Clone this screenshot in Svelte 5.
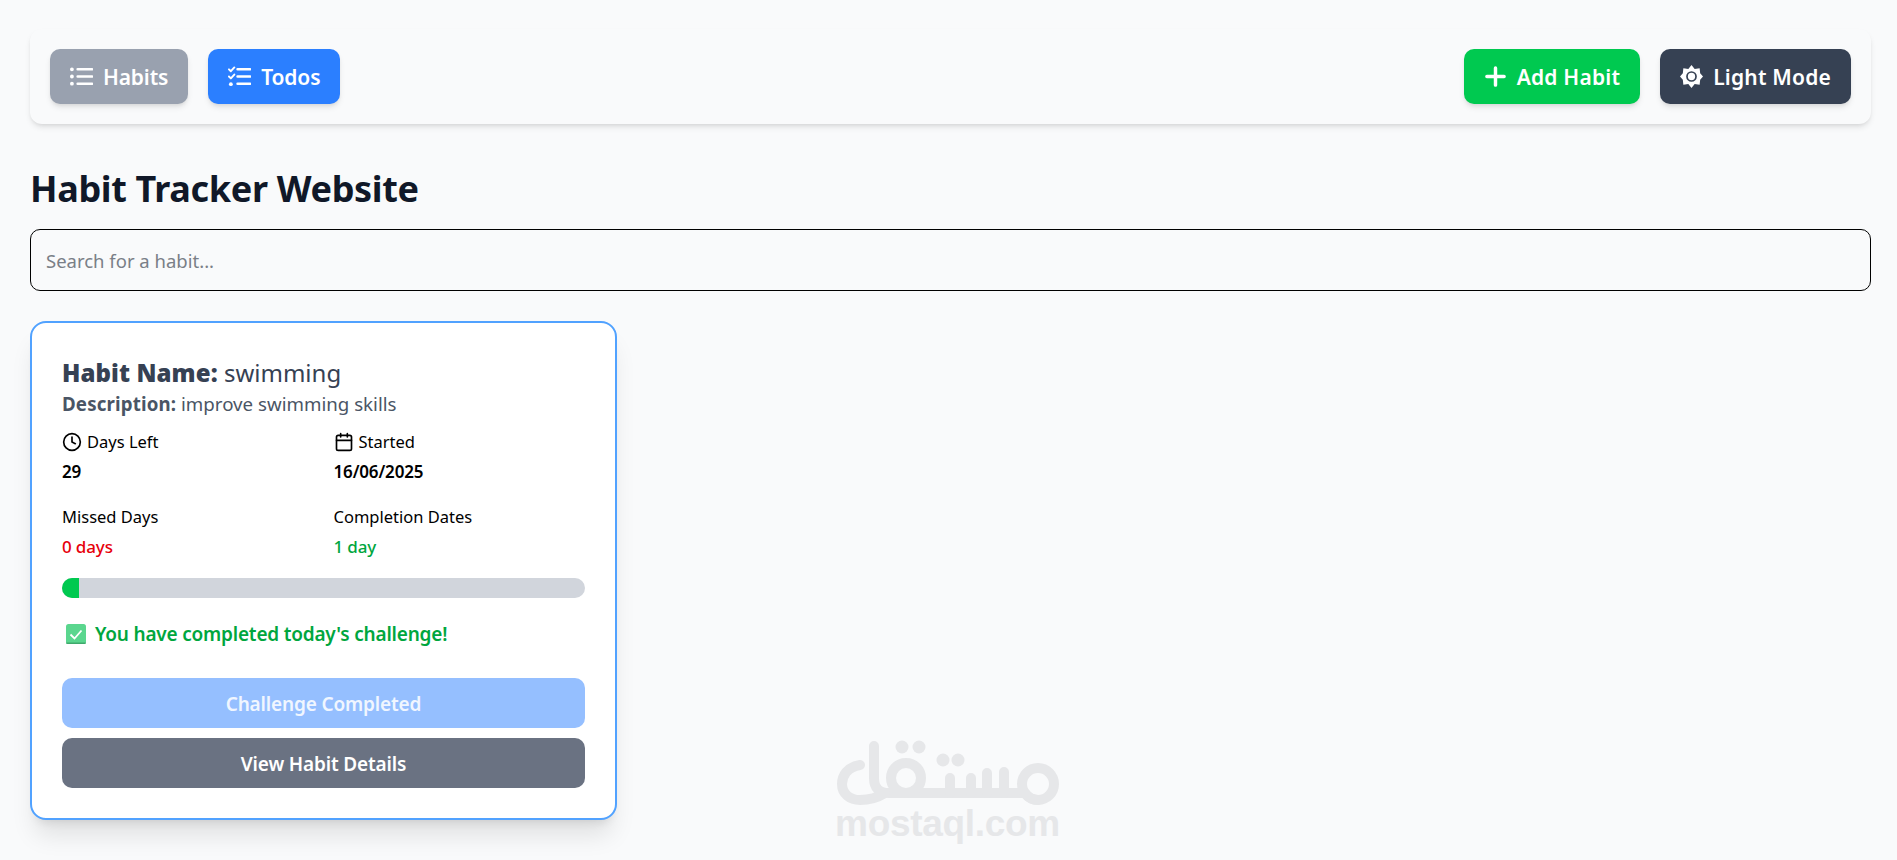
<script>
  const stats = [
    { label: 'Days Left', value: '29', icon: 'clock', tone: '' },
    { label: 'Started', value: '16/06/2025', icon: 'calendar', tone: '' },
    { label: 'Missed Days', value: '0 days', icon: '', tone: 'missed' },
    { label: 'Completion Dates', value: '1 day', icon: '', tone: 'completed' },
  ];
  let query = $state('');
  let progress = 3.3;
</script>

<div class="page">
  <nav class="navbar">
    <div class="group">
      <button class="btn gray">
        <svg class="ico" viewBox="0 0 24 24" fill="none" stroke="currentColor" stroke-width="2.7" stroke-linecap="round">
          <path d="M8 4.5h15M8 12h15M8 19.5h15" />
          <path d="M2 4.5h.01M2 12h.01M2 19.5h.01" stroke-width="4" />
        </svg>
        Habits
      </button>
      <button class="btn blue">
        <svg class="ico" viewBox="0 0 24 24" fill="none" stroke="currentColor" stroke-width="2.7" stroke-linecap="round" stroke-linejoin="round">
          <path d="M10 4.5h13M10 12h13M10 19.5h13" />
          <path d="M1 4.5l2 2 3.6-4M1 12l2 2 3.600-4" stroke-width="2" />
          <path d="M3 20h.01" stroke-width="4" />
        </svg>
        Todos
      </button>
    </div>
    <div class="group">
      <button class="btn add wider">
        <svg class="ico" viewBox="0 0 24 24" fill="none" stroke="currentColor" stroke-width="3.6" stroke-linecap="round">
          <path d="M12 3v18M3 12h18" />
        </svg>
        Add Habit
      </button>
      <button class="btn dark wider">
        <svg class="ico" viewBox="0 0 24 24" fill="currentColor">
          <path fill-rule="evenodd" d="M12 0l3.300 4.050 5.200-.55.55 5.200L24 12l-2.950 3.300-.55 5.200-5.200-.55L12 24l-3.300-4.050-5.200.55-.55-5.200L0 12l2.950-3.300.55-5.200 5.200.55zM12 6.400a5.600 5.600 0 1 0 0 11.200 5.600 5.600 0 0 0 0-11.200z" />
          <circle cx="12" cy="12" r="3.800" />
        </svg>
        Light Mode
      </button>
    </div>
  </nav>

  <h1>Habit Tracker Website</h1>

  <input class="search" type="text" placeholder="Search for a habit..." bind:value={query} />

  <div class="cards">
    <article class="card">
      <h2><strong>Habit Name:</strong> swimming</h2>
      <p class="desc"><strong>Description:</strong> improve swimming skills</p>

      <div class="stats">
        {#each stats as stat}
          <div class="stat">
            <div class="stat-label">
              {#if stat.icon === 'clock'}
                <svg viewBox="0 0 24 24" fill="none" stroke="currentColor" stroke-width="2" stroke-linecap="round" stroke-linejoin="round">
                  <circle cx="12" cy="12" r="10" />
                  <path d="M12 6v6l4 2" />
                </svg>
              {:else if stat.icon === 'calendar'}
                <svg viewBox="0 0 24 24" fill="none" stroke="currentColor" stroke-width="2" stroke-linecap="round" stroke-linejoin="round">
                  <rect x="3" y="4" width="18" height="18" rx="2" />
                  <path d="M8 2v4M16 2v4M3 10h18" />
                </svg>
              {/if}
              {stat.label}
            </div>
            <div class="stat-value {stat.tone}">{stat.value}</div>
          </div>
        {/each}
      </div>

      <div class="track">
        <div class="fill" style="width: {progress}%"></div>
      </div>

      <p class="done">
        <svg viewBox="0 0 20 20">
          <rect x="0" y="0" width="20" height="20" rx="2.500" fill="#5ad68e" />
          <path d="M0 18.500a1.500 1.500 0 0 0 1.500 1.500h17a1.500 1.500 0 0 0 1.500-1.500z" fill="#3fa96c" />
          <path d="M4.500 10.500l4 4 7-8" fill="none" stroke="#fff" stroke-width="1.800" />
        </svg>
        You have completed today's challenge!
      </p>

      <button class="wide light" disabled>Challenge Completed</button>
      <button class="wide slate">View Habit Details</button>
    </article>
  </div>

  <div class="watermark">
    <svg viewBox="0 0 225 66" width="225" height="66" fill="none" stroke="#e6e7e9" stroke-width="10" stroke-linecap="round" stroke-linejoin="round">
      <path d="M39 6v32q0 15 15 15h136q5 7 13 7" />
      <path d="M25 25C12 27 7 36 7 44c0 10 8 16 18 16s17-2 25-7" />
      <circle cx="203" cy="44" r="16" />
      <circle cx="71" cy="38" r="15" />
      <path d="M115 38v15M136 38v15M152 33v20M169 32v21" />
      <g fill="#e6e7e9" stroke="none">
        <circle cx="67" cy="7" r="6.500" />
        <circle cx="84" cy="7" r="6.500" />
        <circle cx="108" cy="20" r="6.500" />
        <circle cx="123" cy="20" r="6.500" />
      </g>
    </svg>
    <span>mostaql.com</span>
  </div>
</div>

<style>
  :global(body) {
    margin: 0;
    background: #f9fafb;
    font-family: "Noto Sans", "Open Sans", sans-serif;
    overflow: hidden;
  }

  .page {
    position: relative;
    height: 860px;
    box-sizing: border-box;
    padding: 29px 26px 0 30px;
    color: #111827;
  }

  .navbar {
    display: flex;
    justify-content: space-between;
    align-items: center;
    padding: 20px;
    border-radius: 12px;
    background: #f9fafb;
    box-shadow: 0 4px 6px -1px rgba(0, 0, 0, 0.1), 0 2px 4px -2px rgba(0, 0, 0, 0.1);
  }

  .group {
    display: flex;
    gap: 20px;
  }

  .btn {
    display: flex;
    align-items: center;
    justify-content: center;
    gap: 10px;
    height: 55px;
    padding: 0 20px;
    border: none;
    border-radius: 10px;
    color: #fff;
    font-family: inherit;
    font-size: 21px;
    font-weight: 600;
    letter-spacing: -0.15px;
    box-shadow: 0 4px 6px -1px rgba(0, 0, 0, 0.1), 0 2px 4px -2px rgba(0, 0, 0, 0.1);
  }

  .btn.wider {
    letter-spacing: 0.2px;
  }

  .ico {
    width: 23px;
    height: 23px;
  }

  .gray { background: #99a1af; }
  .blue { background: #2b7fff; }
  .add { background: #00c950; }
  .dark { background: #364153; }

  h1 {
    margin: 43px 0 0;
    font-size: 36px;
    line-height: 44px;
    font-weight: 700;
    letter-spacing: -0.33px;
    color: #101828;
  }

  .search {
    display: block;
    box-sizing: border-box;
    width: 100%;
    height: 62px;
    margin-top: 18px;
    padding: 0 15px;
    border: 1px solid #000;
    border-radius: 10px;
    background: transparent;
    font-family: inherit;
    font-size: 18.5px;
    outline: none;
  }

  .search::placeholder {
    color: #7a7f87;
  }

  .cards {
    margin-top: 30px;
  }

  .card {
    box-sizing: border-box;
    width: 587px;
    height: 499px;
    padding: 32px 30px 30px;
    border: 2px solid #51a2ff;
    border-radius: 16px;
    background: #fff;
    box-shadow: 0 20px 25px -5px rgba(0, 0, 0, 0.1), 0 8px 10px -6px rgba(0, 0, 0, 0.1);
  }

  h2 {
    margin: 0;
    font-size: 24px;
    line-height: 35px;
    font-weight: 400;
    color: #364153;
  }

  h2 strong {
    font-weight: 900;
    letter-spacing: 0.1px;
  }

  .desc {
    margin: 0;
    font-size: 18.7px;
    line-height: 28px;
    color: #4a5565;
  }

  .desc strong {
    font-weight: 700;
    letter-spacing: 0.15px;
  }

  .stats {
    display: grid;
    grid-template-columns: 1fr 1fr;
    column-gap: 20px;
    row-gap: 15px;
    margin-top: 9px;
  }

  .stat-label {
    display: flex;
    align-items: center;
    gap: 5px;
    font-size: 16.5px;
    line-height: 30px;
    color: #000;
  }

  .stat-label svg {
    width: 20px;
    height: 20px;
  }

  .stat-value {
    font-size: 17px;
    line-height: 30px;
    font-weight: 600;
    letter-spacing: -0.15px;
    color: #000;
  }

  .stat-value.missed {
    color: #e7000b;
    font-weight: 500;
  }

  .stat-value.completed {
    color: #00a63e;
    font-weight: 500;
  }

  .track {
    height: 20px;
    margin-top: 16px;
    border-radius: 10px;
    background: #d1d5dc;
    overflow: hidden;
  }

  .fill {
    height: 100%;
    background: #00c950;
  }

  .done {
    display: flex;
    align-items: center;
    gap: 9px;
    margin: 22px 0 30px 4px;
    font-size: 19px;
    line-height: 28px;
    font-weight: 600;
    letter-spacing: -0.2px;
    color: #00a63e;
  }

  .done svg {
    width: 20px;
    height: 20px;
  }

  .wide {
    display: block;
    width: 100%;
    height: 50px;
    padding: 2px 0 0;
    border: none;
    border-radius: 10px;
    color: #fff;
    font-family: inherit;
    font-size: 19px;
    font-weight: 600;
    letter-spacing: -0.15px;
  }

  .light {
    background: #95bfff;
    color: #f0f6ff;
  }

  .slate {
    margin-top: 10px;
    background: #6a7282;
  }

  .watermark {
    position: absolute;
    left: 835px;
    top: 740px;
    width: 225px;
    display: flex;
    flex-direction: column;
    align-items: center;
    pointer-events: none;
  }

  .watermark span {
    font-family: "Liberation Sans", sans-serif;
    font-weight: 700;
    font-size: 37px;
    line-height: 36px;
    letter-spacing: -0.3px;
    color: #e6e7e9;
  }
</style>
